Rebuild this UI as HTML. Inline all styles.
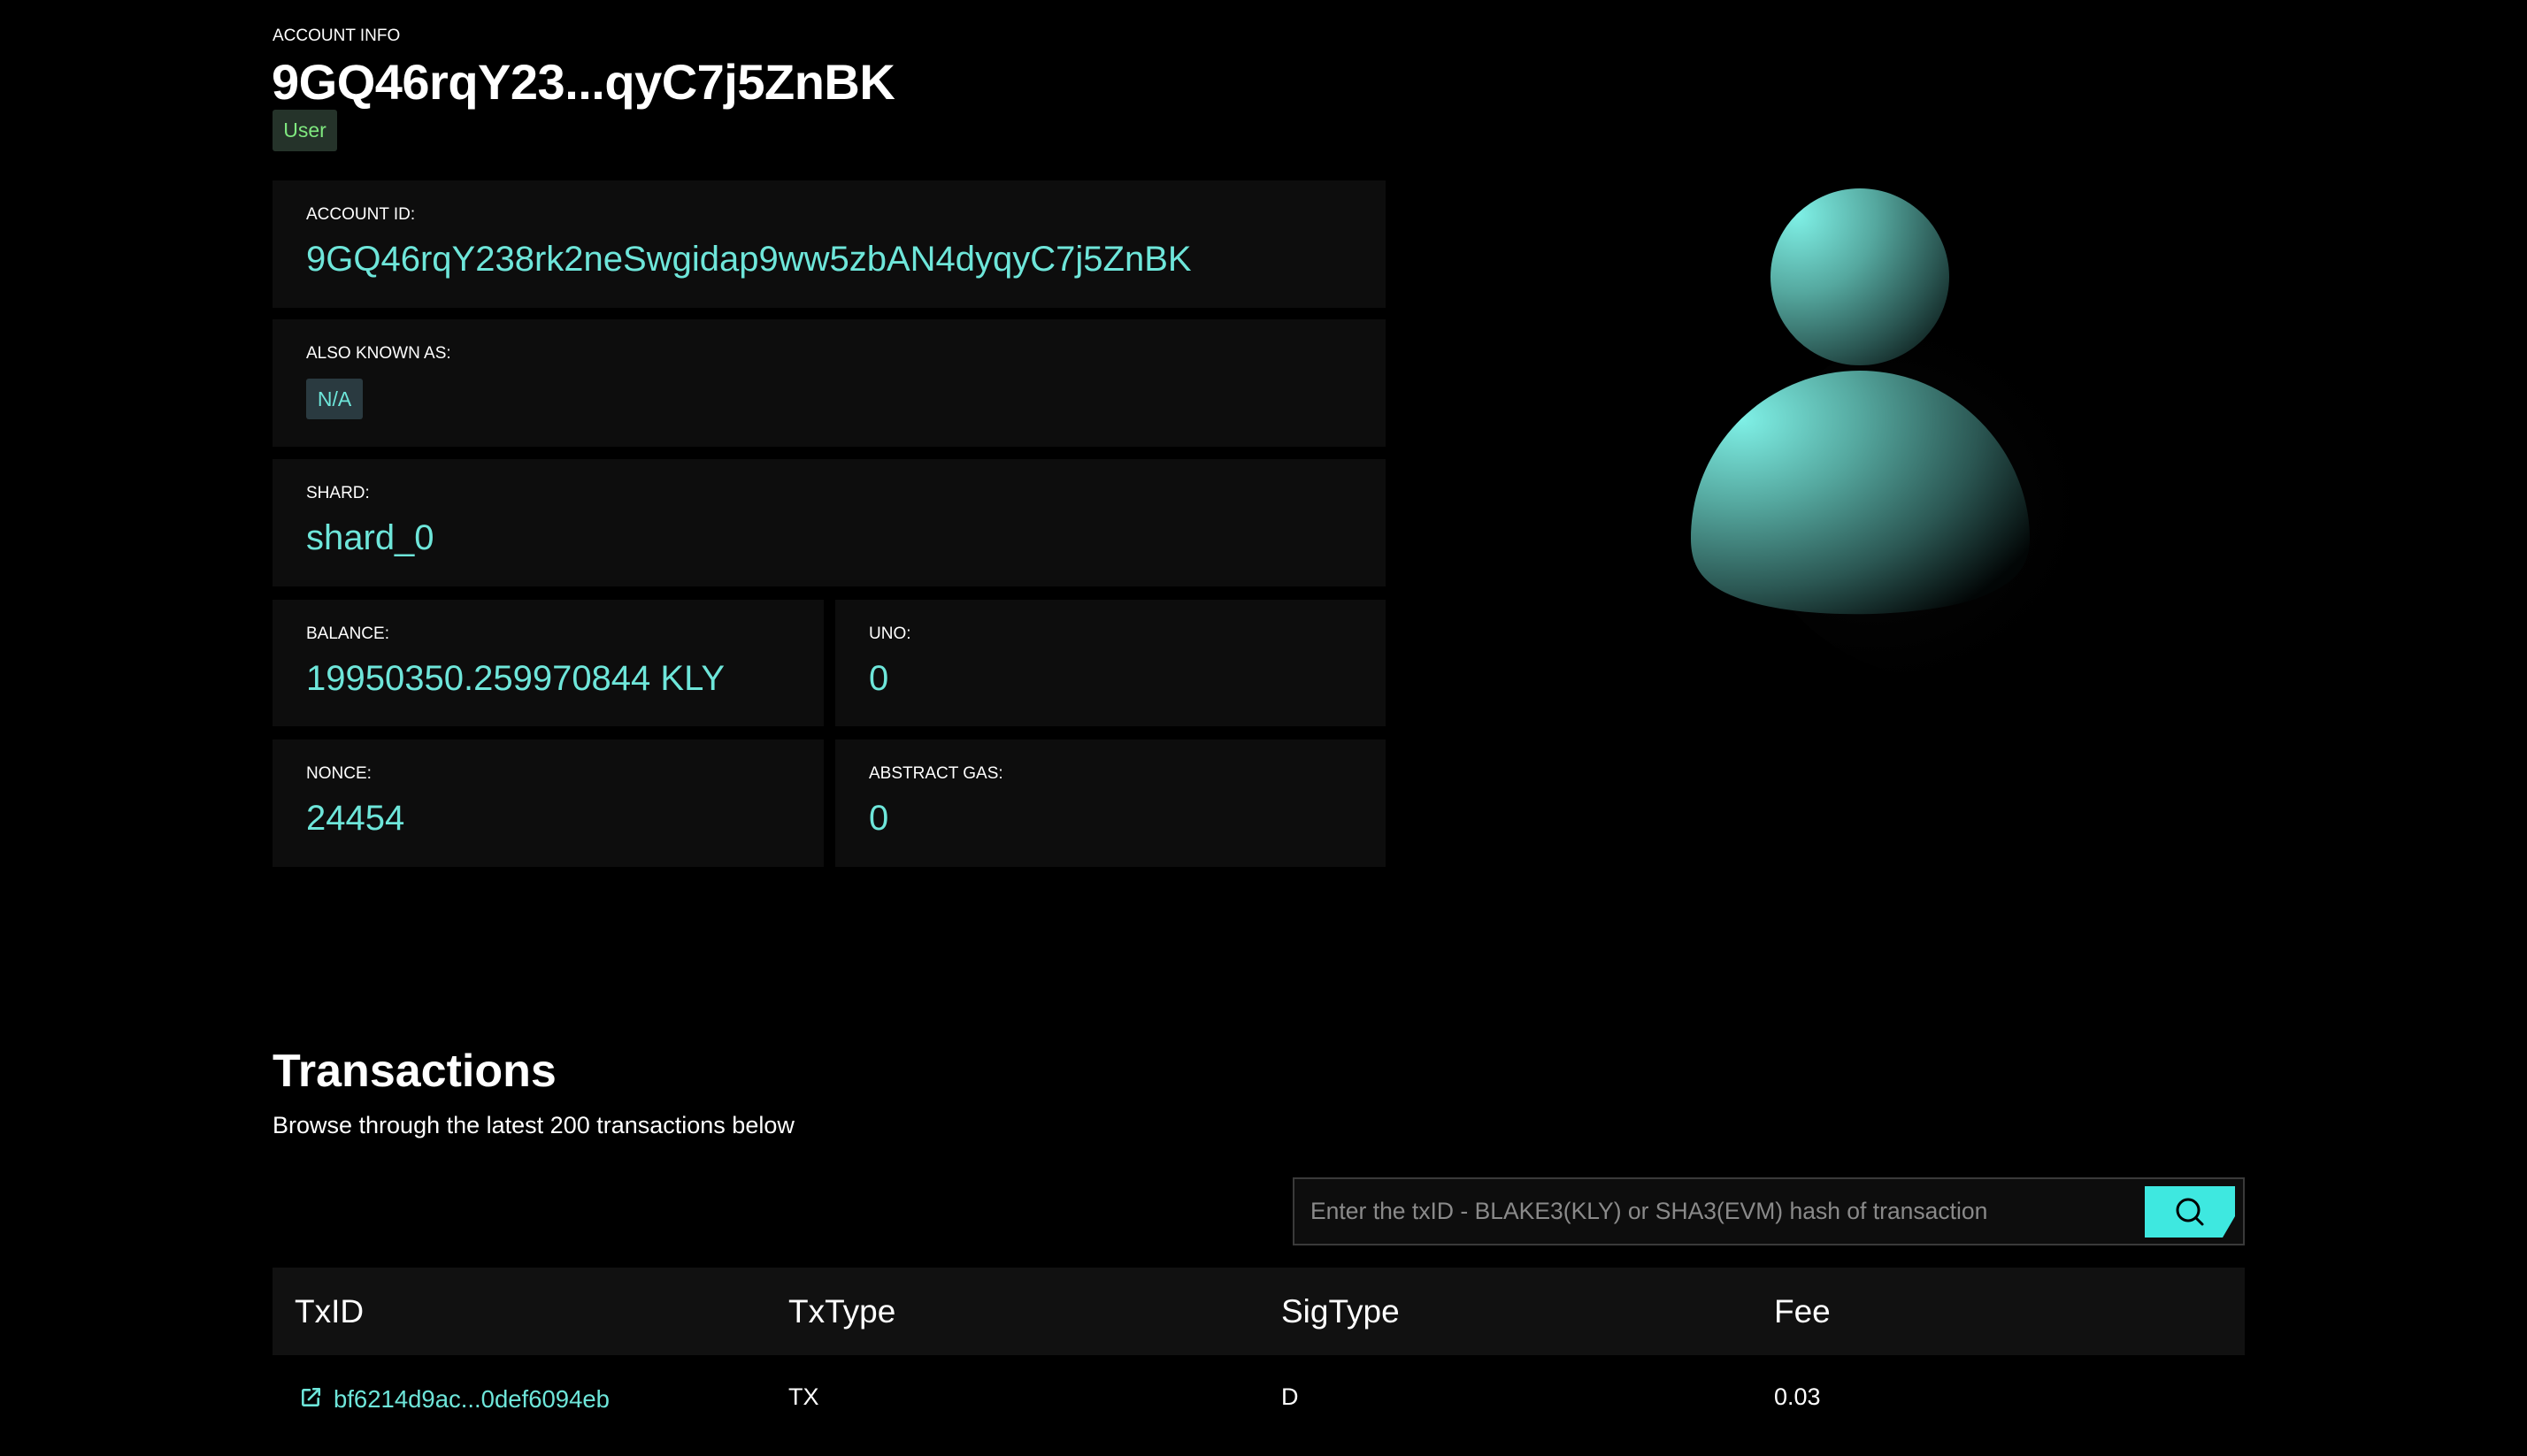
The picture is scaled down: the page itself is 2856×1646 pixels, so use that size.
<!DOCTYPE html>
<html><head><meta charset="utf-8"><style>
*{margin:0;padding:0;box-sizing:border-box}
body{width:2856px;height:1646px;background:#000;color:#fff;font-family:"Liberation Sans",sans-serif;position:relative;overflow:hidden}
.a{position:absolute}
.card{position:absolute;background:#0d0d0d}
.lbl{position:absolute;left:38px;top:28px;font-size:19px;color:#fff}
.val{position:absolute;left:38px;top:67px;font-size:40px;color:#6ee6da;white-space:nowrap}
</style></head><body>
<div class="a" style="left:308px;top:30px;font-size:19px">ACCOUNT INFO</div>
<div class="a" style="left:307px;top:60px;font-size:56px;font-weight:bold;letter-spacing:-0.5px">9GQ46rqY23...qyC7j5ZnBK</div>
<div class="a" style="left:308px;top:124px;width:73px;height:47px;background:#25332a;border-radius:3px;color:#7fe87f;font-size:23px;line-height:47px;text-align:center">User</div>

<div class="card" style="left:308px;top:204px;width:1258px;height:144px"><div class="lbl">ACCOUNT ID:</div><div class="val">9GQ46rqY238rk2neSwgidap9ww5zbAN4dyqyC7j5ZnBK</div></div>
<div class="card" style="left:308px;top:361px;width:1258px;height:144px"><div class="lbl">ALSO KNOWN AS:</div>
<div class="a" style="left:38px;top:67px;width:64px;height:46px;background:#2a3a40;border-radius:3px;color:#6ee6da;font-size:23px;line-height:46px;text-align:center">N/A</div></div>
<div class="card" style="left:308px;top:519px;width:1258px;height:144px"><div class="lbl">SHARD:</div><div class="val">shard_0</div></div>
<div class="card" style="left:308px;top:678px;width:623px;height:143px"><div class="lbl">BALANCE:</div><div class="val">19950350.259970844 KLY</div></div>
<div class="card" style="left:944px;top:678px;width:622px;height:143px"><div class="lbl">UNO:</div><div class="val">0</div></div>
<div class="card" style="left:308px;top:836px;width:623px;height:144px"><div class="lbl">NONCE:</div><div class="val">24454</div></div>
<div class="card" style="left:944px;top:836px;width:622px;height:144px"><div class="lbl">ABSTRACT GAS:</div><div class="val">0</div></div>

<svg class="a" style="left:1850px;top:180px" width="600" height="600" viewBox="0 0 600 600">
<defs>
<radialGradient id="g1" cx="0.15" cy="0.15" r="1.1"><stop offset="0" stop-color="#7ff0e6"/><stop offset="0.4" stop-color="#55a89f"/><stop offset="0.75" stop-color="#2a5652"/><stop offset="1" stop-color="#0a1716"/></radialGradient>
<radialGradient id="g2" cx="0.15" cy="0.2" r="1.0"><stop offset="0" stop-color="#7ff0e6"/><stop offset="0.35" stop-color="#55a89f"/><stop offset="0.7" stop-color="#2b5753"/><stop offset="1" stop-color="#020606"/></radialGradient>
<radialGradient id="sh" cx="0.3" cy="0.5" r="0.6"><stop offset="0" stop-color="#111" stop-opacity="0.8"/><stop offset="1" stop-color="#000" stop-opacity="0"/></radialGradient>
</defs>
<ellipse cx="360" cy="390" rx="230" ry="200" fill="url(#sh)"/>
<ellipse cx="252" cy="133" rx="101" ry="100" fill="url(#g1)"/>
<path d="M61 429 C61 320 150 239 252 239 C360 239 444 330 444 429 C444 466 420 484 380 498 C320 517 200 521 130 501 C80 487 61 466 61 429Z" fill="url(#g2)"/>
</svg>

<div class="a" style="left:308px;top:1181px;font-size:52px;font-weight:bold">Transactions</div>
<div class="a" style="left:308px;top:1257px;font-size:27px">Browse through the latest 200 transactions below</div>

<div class="a" style="left:1461px;top:1331px;width:1076px;height:77px;border:2px solid #3a3a3a;background:#0d0d0d">
<div class="a" style="left:18px;top:21px;font-size:26.5px;color:#8a8a8a">Enter the txID - BLAKE3(KLY) or SHA3(EVM) hash of transaction</div>
</div>
<svg class="a" style="left:2424px;top:1341px" width="102" height="58" viewBox="0 0 102 58">
<path d="M0 0H102V34L88 58H0Z" fill="#3ee8e0"/>
<circle cx="49" cy="27" r="12" fill="none" stroke="#000" stroke-width="3"/>
<path d="M58 36L65 43" stroke="#000" stroke-width="3" stroke-linecap="round"/>
</svg>

<div class="a" style="left:308px;top:1433px;width:2229px;height:99px;background:#111"></div>
<div class="a" style="left:333px;top:1462px;font-size:37px">TxID</div>
<div class="a" style="left:891px;top:1462px;font-size:37px">TxType</div>
<div class="a" style="left:1448px;top:1462px;font-size:37px">SigType</div>
<div class="a" style="left:2005px;top:1462px;font-size:37px">Fee</div>

<svg class="a" style="left:338px;top:1567px" width="26" height="26" viewBox="0 0 24 24" fill="none" stroke="#6ee6da" stroke-width="2.4" stroke-linecap="round" stroke-linejoin="round"><path d="M11 4H5a1 1 0 0 0-1 1v14a1 1 0 0 0 1 1h14a1 1 0 0 0 1-1v-6"/><path d="M15 3h6v6"/><path d="M10 14L21 3"/></svg>
<div class="a" style="left:377px;top:1566px;font-size:27.5px;color:#6ee6da">bf6214d9ac...0def6094eb</div>
<div class="a" style="left:891px;top:1564px;font-size:27px">TX</div>
<div class="a" style="left:1448px;top:1564px;font-size:27px">D</div>
<div class="a" style="left:2005px;top:1564px;font-size:27px">0.03</div>
</body></html>
